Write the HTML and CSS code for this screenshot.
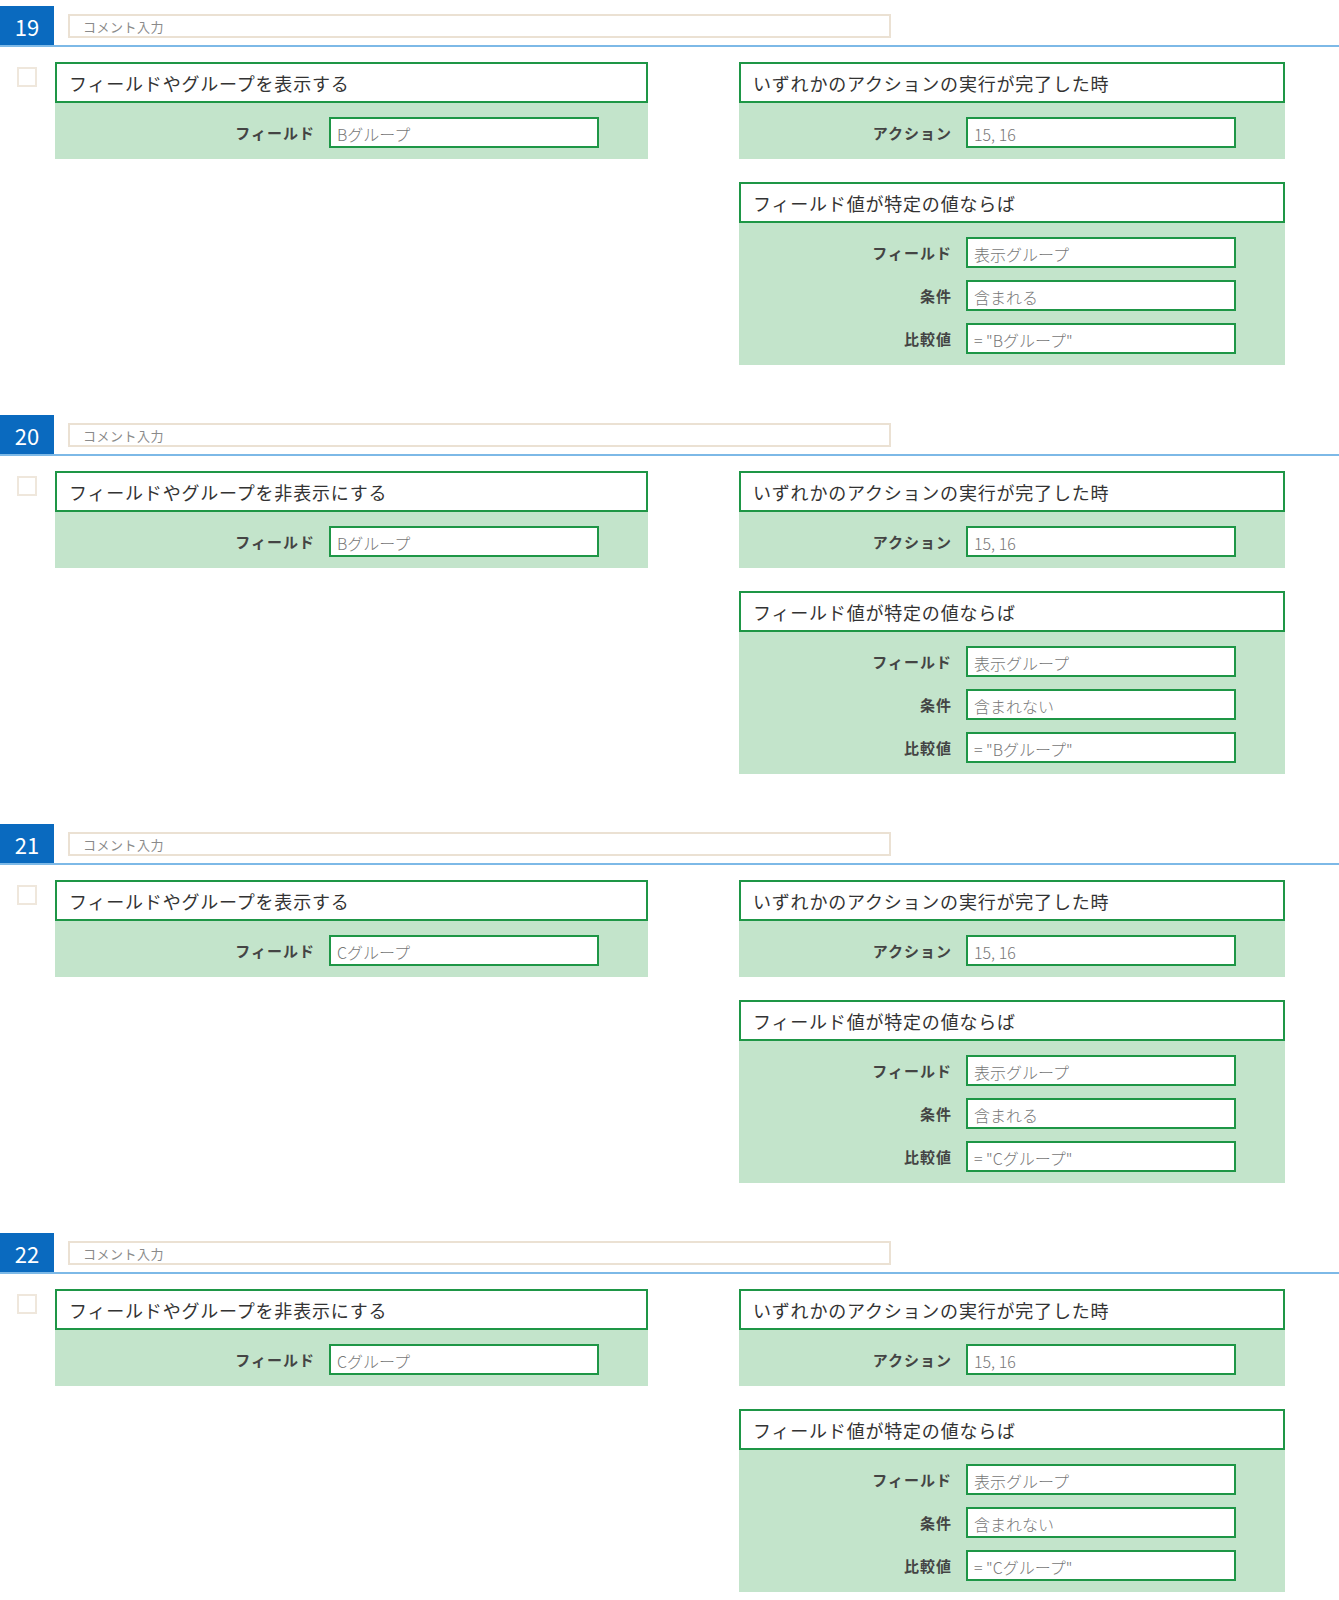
FILE: index.html
```html
<!DOCTYPE html>
<html>
  <head>
    <meta charset="utf-8">
    <title>ルール一覧</title>
    <link rel="stylesheet" href="styles.css">
  </head>
  <body>
    <div class="rules">

      <section class="rule">
        <div class="rule-head">
          <span class="rule-no">19</span>
          <input class="comment" type="text" placeholder="コメント入力">
        </div>
        <div class="rule-body">
          <span class="check"></span>
          <div class="col-left">
            <div class="card">
              <div class="card-title">フィールドやグループを表示する</div>
              <div class="card-body">
                <div class="row"><label>フィールド</label><input type="text" value="Bグループ"></div>
              </div>
            </div>
          </div>
          <div class="col-right">
            <div class="card">
              <div class="card-title">いずれかのアクションの実行が完了した時</div>
              <div class="card-body">
                <div class="row"><label>アクション</label><input type="text" value="15, 16"></div>
              </div>
            </div>
            <div class="card">
              <div class="card-title">フィールド値が特定の値ならば</div>
              <div class="card-body">
                <div class="row"><label>フィールド</label><input type="text" value="表示グループ"></div>
                <div class="row"><label>条件</label><input type="text" value="含まれる"></div>
                <div class="row"><label>比較値</label><input type="text" value="= &quot;Bグループ&quot;"></div>
              </div>
            </div>
          </div>
        </div>
      </section>

      <section class="rule">
        <div class="rule-head">
          <span class="rule-no">20</span>
          <input class="comment" type="text" placeholder="コメント入力">
        </div>
        <div class="rule-body">
          <span class="check"></span>
          <div class="col-left">
            <div class="card">
              <div class="card-title">フィールドやグループを非表示にする</div>
              <div class="card-body">
                <div class="row"><label>フィールド</label><input type="text" value="Bグループ"></div>
              </div>
            </div>
          </div>
          <div class="col-right">
            <div class="card">
              <div class="card-title">いずれかのアクションの実行が完了した時</div>
              <div class="card-body">
                <div class="row"><label>アクション</label><input type="text" value="15, 16"></div>
              </div>
            </div>
            <div class="card">
              <div class="card-title">フィールド値が特定の値ならば</div>
              <div class="card-body">
                <div class="row"><label>フィールド</label><input type="text" value="表示グループ"></div>
                <div class="row"><label>条件</label><input type="text" value="含まれない"></div>
                <div class="row"><label>比較値</label><input type="text" value="= &quot;Bグループ&quot;"></div>
              </div>
            </div>
          </div>
        </div>
      </section>

      <section class="rule">
        <div class="rule-head">
          <span class="rule-no">21</span>
          <input class="comment" type="text" placeholder="コメント入力">
        </div>
        <div class="rule-body">
          <span class="check"></span>
          <div class="col-left">
            <div class="card">
              <div class="card-title">フィールドやグループを表示する</div>
              <div class="card-body">
                <div class="row"><label>フィールド</label><input type="text" value="Cグループ"></div>
              </div>
            </div>
          </div>
          <div class="col-right">
            <div class="card">
              <div class="card-title">いずれかのアクションの実行が完了した時</div>
              <div class="card-body">
                <div class="row"><label>アクション</label><input type="text" value="15, 16"></div>
              </div>
            </div>
            <div class="card">
              <div class="card-title">フィールド値が特定の値ならば</div>
              <div class="card-body">
                <div class="row"><label>フィールド</label><input type="text" value="表示グループ"></div>
                <div class="row"><label>条件</label><input type="text" value="含まれる"></div>
                <div class="row"><label>比較値</label><input type="text" value="= &quot;Cグループ&quot;"></div>
              </div>
            </div>
          </div>
        </div>
      </section>

      <section class="rule">
        <div class="rule-head">
          <span class="rule-no">22</span>
          <input class="comment" type="text" placeholder="コメント入力">
        </div>
        <div class="rule-body">
          <span class="check"></span>
          <div class="col-left">
            <div class="card">
              <div class="card-title">フィールドやグループを非表示にする</div>
              <div class="card-body">
                <div class="row"><label>フィールド</label><input type="text" value="Cグループ"></div>
              </div>
            </div>
          </div>
          <div class="col-right">
            <div class="card">
              <div class="card-title">いずれかのアクションの実行が完了した時</div>
              <div class="card-body">
                <div class="row"><label>アクション</label><input type="text" value="15, 16"></div>
              </div>
            </div>
            <div class="card">
              <div class="card-title">フィールド値が特定の値ならば</div>
              <div class="card-body">
                <div class="row"><label>フィールド</label><input type="text" value="表示グループ"></div>
                <div class="row"><label>条件</label><input type="text" value="含まれない"></div>
                <div class="row"><label>比較値</label><input type="text" value="= &quot;Cグループ&quot;"></div>
              </div>
            </div>
          </div>
        </div>
      </section>

    </div>
  </body>
</html>
```

FILE: styles.css
```css
body {
  margin: 0;
  background: #fff;
  color: #333;
  font-family: "Noto Sans CJK JP", "Noto Sans", sans-serif;
}
input {
  font-family: inherit;
  box-sizing: border-box;
  outline: none;
}

section.rule {
  padding-top: 6px;
  margin-bottom: 44px;
}

/* header line: number + comment */
div.rule-head {
  display: flex;
  align-items: flex-start;
  height: 39px;
  border-bottom: 2px solid #7db9e7;
}
span.rule-no {
  width: 54px;
  height: 39px;
  background: #0a6abf;
  color: #fff;
  font-size: 22px;
  line-height: 40px;
  text-align: center;
}
input.comment {
  margin: 8px 0 0 14px;
  width: 823px;
  height: 24px;
  border: 2px solid #ebe1d3;
  padding: 1px 13px 0;
  font-size: 13px;
  letter-spacing: 0.5px;
}
input.comment::placeholder {
  color: #8a8a8a;
}

/* body */
div.rule-body {
  display: flex;
  align-items: flex-start;
  padding-top: 15px;
}
span.check {
  box-sizing: border-box;
  width: 20px;
  height: 20px;
  margin: 5px 18px 0 17px;
  border: 2px solid #efe7dc;
  background: #fff;
}
div.col-left {
  width: 593px;
}
div.col-right {
  width: 546px;
  margin-left: 91px;
  display: flex;
  flex-direction: column;
  gap: 23px;
}

div.card-title {
  box-sizing: border-box;
  height: 41px;
  border: 2px solid #1e9646;
  padding: 1px 12px 0;
  display: flex;
  align-items: center;
  font-size: 18px;
  letter-spacing: 0.8px;
  color: #333;
}
div.card-body {
  background: #c3e4cb;
  padding: 14px 49px 11px 0;
  display: flex;
  flex-direction: column;
  gap: 12px;
}
div.row {
  display: flex;
  justify-content: flex-end;
  align-items: center;
  gap: 14px;
}
div.row label {
  font-size: 15px;
  font-weight: bold;
  letter-spacing: 1px;
  color: #444;
}
div.row input {
  width: 270px;
  height: 31px;
  border: 2px solid #1e9646;
  background: #fff;
  padding: 2px 6px 0;
  font-size: 16px;
  font-weight: 300;
  color: #777;
}
```
